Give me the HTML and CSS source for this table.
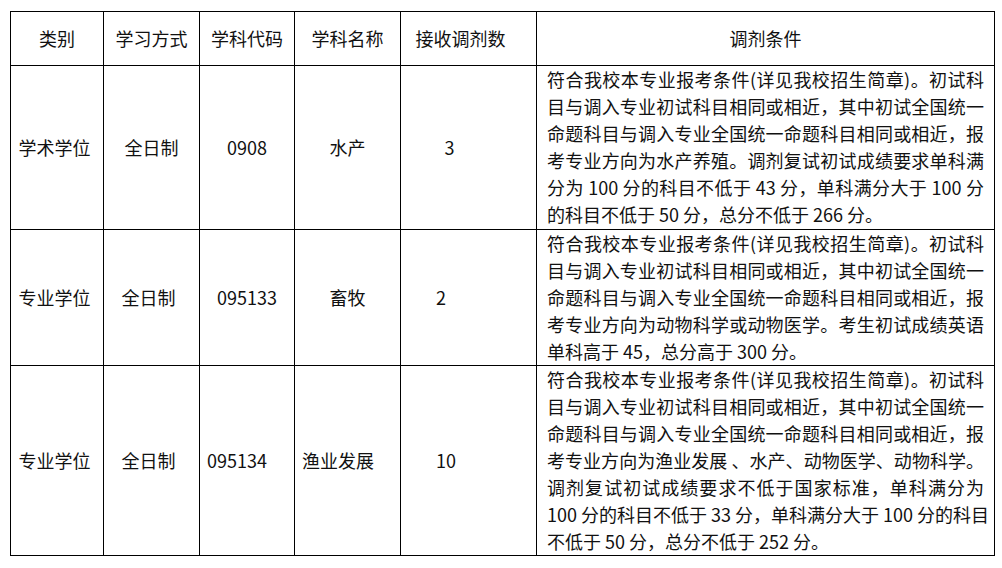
FILE: index.html
```html
<!DOCTYPE html>
<html lang="zh-CN">
<head>
<meta charset="utf-8">
<title>调剂条件</title>
<link rel="stylesheet" href="styles.css">
</head>
<body>
<table class="grid">
  <colgroup>
    <col class="c1"><col class="c2"><col class="c3"><col class="c4"><col class="c5"><col class="c6">
  </colgroup>
  <thead>
    <tr class="head">
      <th>类别</th>
      <th>学习方式</th>
      <th>学科代码</th>
      <th>学科名称</th>
      <th class="h5">接收调剂数</th>
      <th>调剂条件</th>
    </tr>
  </thead>
  <tbody>
    <tr class="r1">
      <td class="first">学术学位</td>
      <td>全日制</td>
      <td>0908</td>
      <td>水产</td>
      <td class="num-a">3</td>
      <td class="cond">
        <span class="ln">符合我校本专业报考条件(详见我校招生简章)。初试科</span>
        <span class="ln">目与调入专业初试科目相同或相近，其中初试全国统一</span>
        <span class="ln">命题科目与调入专业全国统一命题科目相同或相近，报</span>
        <span class="ln">考专业方向为水产养殖。调剂复试初试成绩要求单科满</span>
        <span class="ln">分为 100 分的科目不低于 43 分，单科满分大于 100 分</span>
        <span class="ln">的科目不低于 50 分，总分不低于 266 分。</span>
      </td>
    </tr>
    <tr class="r2">
      <td class="first">专业学位</td>
      <td class="shift">全日制</td>
      <td>095133</td>
      <td>畜牧</td>
      <td class="num-b">2</td>
      <td class="cond">
        <span class="ln">符合我校本专业报考条件(详见我校招生简章)。初试科</span>
        <span class="ln">目与调入专业初试科目相同或相近，其中初试全国统一</span>
        <span class="ln">命题科目与调入专业全国统一命题科目相同或相近，报</span>
        <span class="ln">考专业方向为动物科学或动物医学。考生初试成绩英语</span>
        <span class="ln">单科高于 45，总分高于 300 分。</span>
      </td>
    </tr>
    <tr class="r3">
      <td class="first">专业学位</td>
      <td class="shift">全日制</td>
      <td class="left">095134</td>
      <td class="left">渔业发展</td>
      <td class="num-b">10</td>
      <td class="cond">
        <span class="ln">符合我校本专业报考条件(详见我校招生简章)。初试科</span>
        <span class="ln">目与调入专业初试科目相同或相近，其中初试全国统一</span>
        <span class="ln">命题科目与调入专业全国统一命题科目相同或相近，报</span>
        <span class="ln">考专业方向为渔业发展 、水产、动物医学、动物科学。</span>
        <span class="ln">调剂复试初试成绩要求不低于国家标准，单科满分为</span>
        <span class="ln">100 分的科目不低于 33 分，单科满分大于 100 分的科目</span>
        <span class="ln">不低于 50 分，总分不低于 252 分。</span>
      </td>
    </tr>
  </tbody>
</table>
</body>
</html>
```
FILE: styles.css
```css
html, body {
  margin: 0;
  padding: 0;
  background: #fff;
}

body {
  padding: 11px 0 0 10px;
  font-family: "Noto Sans CJK SC", "Liberation Sans", sans-serif;
  font-size: 18px;
  color: #111;
}

.grid {
  border-collapse: collapse;
  table-layout: fixed;
  width: 984px;
}

.c1 { width: 93px; }
.c2 { width: 96px; }
.c3 { width: 95px; }
.c4 { width: 106px; }
.c5 { width: 136px; }
.c6 { width: 458px; }

.grid th,
.grid td {
  border: 1px solid #000;
  padding: 0;
  text-align: center;
  vertical-align: middle;
  font-weight: 400;
  line-height: 27px;
  white-space: nowrap;
}

.head { height: 54px; }
.r1 { height: 164px; }
.r2 { height: 136px; }
.r3 { height: 190px; }

.grid th.h5 {
  padding-right: 16px;
}

.grid td.first {
  padding-right: 5px;
}

.grid td.left {
  text-align: left;
  padding-left: 7px;
}

.grid td.shift {
  padding-right: 6px;
}

.grid td.num-a {
  padding-right: 38px;
}

.grid td.num-b {
  text-align: left;
  padding-left: 35px;
}

.grid td.cond {
  text-align: left;
  vertical-align: top;
  padding: 0 10px;
  white-space: normal;
}

.ln {
  display: block;
  text-align: justify;
  text-align-last: justify;
  white-space: nowrap;
}

.ln:last-child {
  text-align-last: left;
}
```
